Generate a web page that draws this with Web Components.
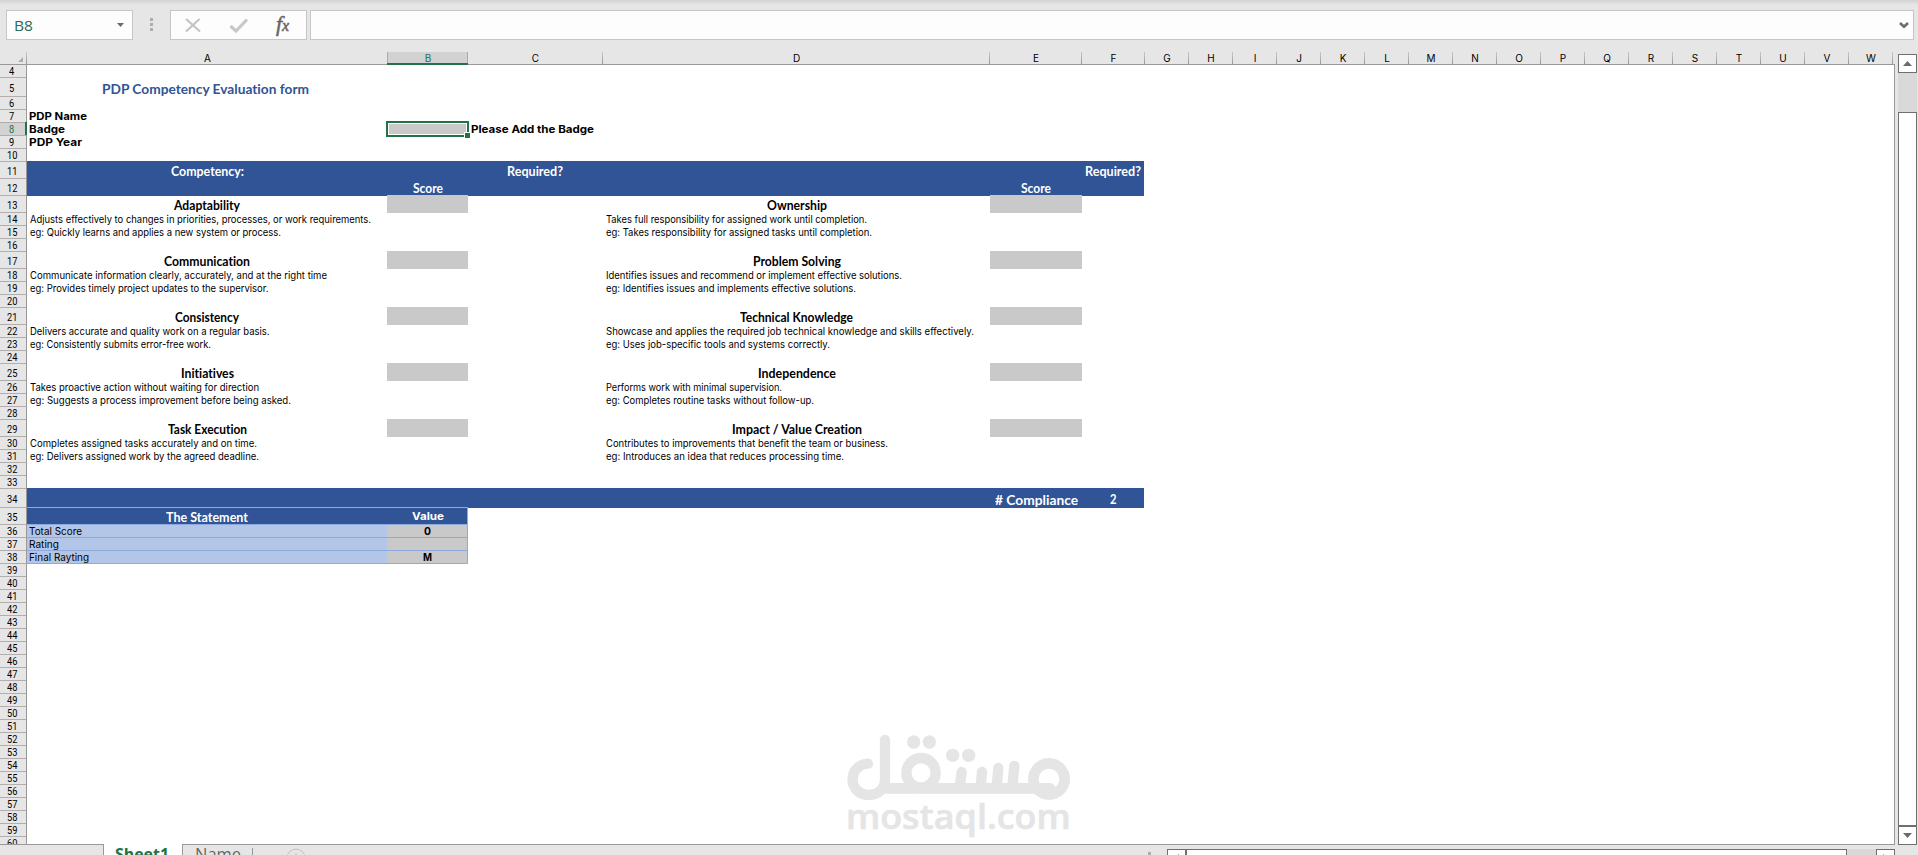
<!DOCTYPE html>
<html lang="en">
<head>
<meta charset="utf-8">
<title>PDP Competency Evaluation form</title>
<style>
  html, body { margin: 0; height: 855px; overflow: hidden; background: #e6e6e6; }
  body { font-family: Inter, "Liberation Sans", sans-serif; color: #000; }
</style>
</head>
<body>
<sheet-app></sheet-app>

<script>
// fit-text: one line of text squeezed or stretched to the width given in w
class FitText extends HTMLElement {
  connectedCallback() {
    const shadow = this.attachShadow({ mode: "open" });
    shadow.innerHTML = `
      <style>
        :host { display: inline-block; white-space: nowrap; font-variant-ligatures: none; }
        span { display: inline-block; transform-origin: 0 50%; }
      </style>
      <span><slot></slot></span>
    `;
    const w = parseFloat(this.getAttribute("w"));
    if (!w) return;
    const span = shadow.querySelector("span");
    const natural = span.getBoundingClientRect().width;
    this.style.width = `${w}px`;
    if (natural) span.style.transform = `scaleX(${w / natural})`;
  }
}
customElements.define("fit-text", FitText);

// formula-bar: name box, cancel / enter / fx buttons and the formula input
class FormulaBar extends HTMLElement {
  constructor() {
    super();
    const shadow = this.attachShadow({ mode: "open" });
    shadow.innerHTML = `
      <style>
        :host { display: flex; box-sizing: border-box; height: 52px; padding: 10px 4px 12px 6px;
          background: linear-gradient(#d2d2d2, #e6e6e6 5px); }
        .box { box-sizing: border-box; height: 30px; background: #fdfdfd; border: 1px solid #c6c6c6;
          display: flex; align-items: center; }
        .name { width: 127px; padding: 0 8px 0 7px; justify-content: space-between;
          color: #2f6a55; font: 15px/28px "Open Sans", sans-serif; }
        .dots { width: 37px; display: flex; flex-direction: column; align-items: center; gap: 2px; padding-top: 8px; }
        .dots i { width: 3px; height: 3px; background: #b2abab; }
        .buttons { width: 137px; margin-right: 3px; }
        .input { flex: 1; justify-content: flex-end; padding-right: 4px; }
        svg { display: block; }
      </style>
      <div class="box name"><fit-text w="19">B8</fit-text>
        <svg width="7" height="4"><path d="M0 0h7L3.500 4z" fill="#6b6b6b"/></svg></div>
      <div class="dots"><i></i><i></i><i></i></div>
      <div class="box buttons">
        <svg width="135" height="28" fill="none">
          <path d="M15 8l14 12.500M28.500 8L15 20.500" stroke="#c4c4c4" stroke-width="2.200"/>
          <path d="M59.500 15l5.500 5 11-11.500" stroke="#c8c8c8" stroke-width="3.200"/>
          <g font-family="Liberation Serif, serif" font-style="italic" fill="#666" stroke="#666" stroke-width=".5">
            <text x="105" y="19.500" font-size="22">f</text>
            <text x="111" y="20" font-size="16">x</text>
          </g>
        </svg>
      </div>
      <div class="box input">
        <svg width="10" height="7"><path d="M1 1l4 3.800L9 1" fill="none" stroke="#6b6b6b" stroke-width="2.600"/></svg>
      </div>
    `;
  }
}
customElements.define("formula-bar", FormulaBar);

const COLS = [
  ["A", 360], ["B", 81], ["C", 135], ["D", 387], ["E", 92], ["F", 63],
  ..."GHIJKLMNOPQRSTUVW".split("").map(c => [c, 44]),
];

// column-heads: the strip of column letters
class ColumnHeads extends HTMLElement {
  constructor() {
    super();
    const shadow = this.attachShadow({ mode: "open" });
    shadow.innerHTML = `
      <style>
        :host { display: flex; box-sizing: border-box; height: 13px; border-bottom: 1px solid #999;
          background: #e6e6e6; font: 10px/12px Inter, "Liberation Sans", sans-serif; position: relative; z-index: 1; }
        div { box-sizing: border-box; flex: none; text-align: center; height: 12px; padding-left: 1px; }
        .line { border-right: 1px solid; border-image: linear-gradient(#d0cccc, #999090) 1; }
        .B { background: #d2d2d2; color: #217346; height: 13px; border-bottom: 2px solid #217346;
          box-shadow: inset 1px 0 #b0a8a8, inset -1px 0 #b0a8a8; }
        .corner { width: 27px; display: flex; justify-content: flex-end; padding: 5px 3px 0 0; }
      </style>
      <div class="corner line"><svg width="5" height="5"><path d="M5 0v5H0z" fill="#b2abab"/></svg></div>
      ${COLS.map(([c, w]) => `<div class="${c}${c === "A" || c === "B" ? "" : " line"}" style="width:${w}px">${c}</div>`).join("")}
    `;
  }
}
customElements.define("column-heads", ColumnHeads);

// sheet-cell: fill = blue | gray | pale, kind = strong | head | title
class SheetCell extends HTMLElement {
  constructor() {
    super();
    const shadow = this.attachShadow({ mode: "open" });
    shadow.innerHTML = `
      <style>
        :host { display: block; flex: none; box-sizing: border-box; padding: 1px 0 0 2px;
          height: 100%; white-space: nowrap; font-size: 10.5px; line-height: var(--line); position: relative; }
        :host([align="center"]) { text-align: center; padding-left: 0; }
        :host([kind="strong"]) { font-weight: 700; }
        :host([kind="head"]) { font: bold 12.5px/var(--line) Lato, sans-serif; padding-top: 1.5px; }
        :host([kind="title"]) { font: bold 14px/var(--line) Lato, sans-serif; color: #305496; padding-top: 1.5px; }
        :host([fill="blue"]) { background: #305496; box-shadow: 0 1px #305496; color: #fff; }
        :host([fill="gray"]) { background: #c9c9c9; box-shadow: 0 1px #c9c9c9; }
        :host([fill="pale"]) { background: #b4c6e7; }
        :host([table]) { box-shadow: inset 0 1px #8ea9db, 0 1px #8ea9db; }
        :host([table="end"]) { box-shadow: inset -1px 1px #8ea9db, 0 1px #8ea9db; }
        .pick { position: absolute; left: -1px; top: -1px; right: -1px; bottom: -2px; box-sizing: border-box;
          border: 2px solid #217346; box-shadow: inset 0 0 0 1px #fff; }
        .pick::after { content: ""; position: absolute; right: -3px; bottom: -3px; width: 5px; height: 5px;
          background: #217346; box-shadow: -1px -1px #fff; }
        :host([picked]) { z-index: 2; }
      </style>
      <slot></slot>
    `;
  }
  connectedCallback() {
    if (!this.hasAttribute("picked")) return;
    const pick = document.createElement("div");
    pick.className = "pick";
    this.shadowRoot.appendChild(pick);
  }
}
customElements.define("sheet-cell", SheetCell);

// sheet-row: row number on the left, cells in the slot
class SheetRow extends HTMLElement {
  connectedCallback() {
    const n = this.getAttribute("n");
    const h = this.getAttribute("h");
    const shadow = this.attachShadow({ mode: "open" });
    shadow.innerHTML = `
      <style>
        :host { display: flex; height: ${h}px; --line: ${h}px; }
        .num { flex: none; box-sizing: border-box; width: 27px; padding: ${h > 13 ? 2 : 1}px 2px 0 0; text-align: center;
          font: 10.5px/${h}px Roboto, sans-serif; background: #e6e6e6; border-right: 1px solid #999;
          box-shadow: inset 0 1px #b3adad; }
        :host([n="4"]) .num { box-shadow: none; }
        :host([n="8"]) .num { background: #d2d2d2; color: #217346; border-right: 2px solid #217346; padding-right: 1px; }
      </style>
      <div class="num"><fit-text w="${n.length * 5.2}">${n}</fit-text></div>
      <slot></slot>
    `;
  }
}
customElements.define("sheet-row", SheetRow);

// セル内容: [列, 文字, 幅, 属性, 横ずれ]
const HEAD = 'kind="head" align="center"';
const DATA = {
  5: [["A", "PDP Competency Evaluation form", 207, 'kind="title" align="center"', -2]],
  7: [["A", "PDP Name", 58, 'kind="strong"']],
  8: [["A", "Badge", 36, 'kind="strong"'], ["B", "", 0, 'fill="gray" picked'],
      ["C", "Please Add the Badge", 123, 'kind="strong"', .5]],
  9: [["A", "PDP Year", 53, 'kind="strong"']],
  11: [["A", "Competency:", 73, HEAD], ["C", "Required?", 56, HEAD, -1],
       ["F", "Required?", 56, HEAD]],
  12: [["B", "Score", 30, HEAD], ["E", "Score", 30, HEAD]],
  34: [["E", "# Compliance", 83, 'kind="title" align="center"'], ["F", "2", 6.5, `${HEAD} style="padding-top:2px"`]],
  35: [["A", "The Statement", 82, `${HEAD} fill="blue" table`, -.5],
       ["B", "Value", 32, 'kind="strong" align="center" fill="blue" table="end"', -1]],
  36: [["A", "Total Score", 53, 'fill="pale" table'], ["B", "0", 7, 'kind="strong" align="center" fill="gray" table="end"']],
  37: [["A", "Rating", 30, 'fill="pale" table'], ["B", "", 0, 'fill="gray" table="end"']],
  38: [["A", "Final Rayting", 60, 'fill="pale" table'], ["B", "M", 9, 'kind="strong" align="center" fill="gray" table="end"']],
};
DATA[34][1][3] = HEAD;

// 能力項目（左右5件ずつ、4行ごと）
const SKILLS = [
  ["Adaptability", 66, "Adjusts effectively to changes in priorities, processes, or work requirements.", 341,
   "eg: Quickly learns and applies a new system or process.", 251,
   "Ownership", 60, "Takes full responsibility for assigned work until completion.", 261,
   "eg: Takes responsibility for assigned tasks until completion.", 266],
  ["Communication", 86, "Communicate information clearly, accurately, and at the right time", 297,
   "eg: Provides timely project updates to the supervisor.", 238.5,
   "Problem Solving", 88, "Identifies issues and recommend or implement effective solutions.", 296,
   "eg: Identifies issues and implements effective solutions.", 250],
  ["Consistency", 64, "Delivers accurate and quality work on a regular basis.", 239.5,
   "eg: Consistently submits error-free work.", 181,
   "Technical Knowledge", 113, "Showcase and applies the required job technical knowledge and skills effectively.", 368,
   "eg: Uses job-specific tools and systems correctly.", 224],
  ["Initiatives", 53, "Takes proactive action without waiting for direction", 229,
   "eg: Suggests a process improvement before being asked.", 261,
   "Independence", 78, "Performs work with minimal supervision.", 176,
   "eg: Completes routine tasks without follow-up.", 208],
  ["Task Execution", 79, "Completes assigned tasks accurately and on time.", 227,
   "eg: Delivers assigned work by the agreed deadline.", 229,
   "Impact / Value Creation", 130, "Contributes to improvements that benefit the team or business.", 282,
   "eg: Introduces an idea that reduces processing time.", 238],
];
SKILLS.forEach((s, i) => {
  const r = 13 + i * 4;
  DATA[r] = [["A", s[0], s[1], HEAD], ["B", "", 0, 'fill="gray"'], ["D", s[6], s[7], HEAD], ["E", "", 0, 'fill="gray"']];
  DATA[r + 1] = [["A", s[2], s[3], "", .25], ["D", s[8], s[9], "", .25]];
  DATA[r + 2] = [["A", s[4], s[5], "", .25], ["D", s[10], s[11], "", .25]];
});

// 行の高さ
function rowHeight(n) {
  if (n === 4) return 12;
  if (n === 5 || n === 34) return 19;
  if ([11, 12, 13, 17, 21, 25, 29, 35].includes(n)) return 17;
  return 13;
}

function rowCells(n) {
  const isBar = n === 11 || n === 12 || n === 34;
  const data = DATA[n] || [];
  return COLS.slice(0, 6).map(([col, w]) => {
    const [, text, fit, attrs, dx = 0] = data.find(d => d[0] === col) || [col, "", 0, ""];
    const inner = text ? `<fit-text w="${fit}" style="margin-left:${dx * 2}px">${text}</fit-text>` : "";
    const width = col === "F" ? w - 1 : w;
    return `<sheet-cell col="${col}" ${attrs} ${isBar ? 'fill="blue"' : ""} style="width:${width}px">${inner}</sheet-cell>`;
  }).join("");
}

// mostaql-mark: pale watermark over the lower rows
class MostaqlMark extends HTMLElement {
  constructor() {
    super();
    const shadow = this.attachShadow({ mode: "open" });
    shadow.innerHTML = `
      <style>
        :host { display: block; width: 240px; height: 114px; }
        svg { display: block; }
      </style>
      <svg width="240" height="114" viewBox="60 30 720 342" fill="none" stroke="#e5e5e5" stroke-linecap="round">
        <path d="M144 131A47 47 0 1 0 145 225C176 225 195 205 195 178V60" stroke-width="31"/>
        <path d="M190 205H690" stroke-width="32"/>
        <circle cx="303" cy="158" r="44" stroke-width="31"/>
        <circle cx="687" cy="177" r="47" stroke-width="32"/>
        <path d="M425 156l-6 45M486 156l-4 45M535 144l-5 57M583 138l-6 63" stroke-width="31"/>
        <g fill="#e5e5e5" stroke="none">
          <circle cx="281" cy="66" r="20"/><circle cx="328" cy="66" r="20"/>
          <circle cx="398" cy="106" r="20"/><circle cx="446" cy="106" r="20"/>
        </g>
        <text x="78" y="328" font-family="Open Sans, sans-serif" font-weight="600" font-size="102" textLength="674"
          lengthAdjust="spacingAndGlyphs" fill="#e5e5e5" stroke-width="2" stroke-linejoin="round">mostaql.com</text>
      </svg>
    `;
  }
}
customElements.define("mostaql-mark", MostaqlMark);

// sheet-grid: column letters plus every visible row
class SheetGrid extends HTMLElement {
  constructor() {
    super();
    const shadow = this.attachShadow({ mode: "open" });
    let rows = "";
    for (let n = 4; n <= 60; n++) rows += `<sheet-row n="${n}" h="${rowHeight(n)}">${rowCells(n)}</sheet-row>`;
    shadow.innerHTML = `
      <style>
        :host { display: block; width: 1895px; height: 792px; overflow: hidden; position: relative; }
        .rows { background: #fff; border-right: 1px solid #999; height: 779px; overflow: hidden; }
        mostaql-mark { position: absolute; left: 840px; top: 678px; }
      </style>
      <column-heads></column-heads>
      <div class="rows">${rows}</div>
      <mostaql-mark></mostaql-mark>
    `;
  }
}
customElements.define("sheet-grid", SheetGrid);

// side-scroll: vertical scroll bar
class SideScroll extends HTMLElement {
  constructor() {
    super();
    const shadow = this.attachShadow({ mode: "open" });
    shadow.innerHTML = `
      <style>
        :host { display: flex; flex-direction: column; box-sizing: border-box; width: 19px; height: 793px;
          margin-left: 3px; padding-top: 2px; }
        div { box-sizing: border-box; background: #fff; border: 1px solid #6f6f6f; display: grid; place-items: center; }
        .btn { height: 19px; }
        .track { height: 39px; background: #d9d9d9; border: 0; }
        .thumb { flex: 1; }
      </style>
      <div class="btn"><svg width="9" height="5"><path d="M4.500 0L9 5H0z" fill="#6b6b6b"/></svg></div>
      <div class="track"></div>
      <div class="thumb"></div>
      <div class="btn"><svg width="9" height="5"><path d="M0 0h9L4.500 5z" fill="#6b6b6b"/></svg></div>
    `;
  }
}
customElements.define("side-scroll", SideScroll);

// sheet-tabs: sheet tabs and the horizontal scroll bar, cut by the window edge
class SheetTabs extends HTMLElement {
  constructor() {
    super();
    const shadow = this.attachShadow({ mode: "open" });
    shadow.innerHTML = `
      <style>
        :host { display: flex; width: 1895px; height: 11px; overflow: hidden; }
        div { box-sizing: border-box; flex: none; height: 30px; }
        .nav { width: 104px; border: solid #999; border-width: 1px 1px 0 0; }
        .tab { font: 16px/20px "Open Sans", sans-serif; white-space: nowrap; }
        .on { width: 78px; padding: 0 0 0 11px; background: #fff; color: #217346; font-weight: 700; }
        .off { width: 71px; padding: 0 0 0 12px; color: #666; border: solid #999; border-width: 1px 0 0 1px; line-height: 19px; }
        .rest { flex: 1; display: flex; border-top: 1px solid #999; padding-top: 3px; }
        .sep { width: 1px; height: 20px; background: #999; margin-left: -1px; }
        .plus { margin: 0 auto 0 33px; }
        .grip { width: 3px; height: 12px; background: #b2abab; margin: 4px 16px 0 0; }
        .bar { display: flex; margin-top: 1px; width: 728px; background: #d9d9d9; }
        .bar div { height: 19px; background: #fff; border: 1px solid #6f6f6f; width: 19px; display: grid; place-items: center; }
        .bar .thumb { width: 661px; margin: 0 auto 0 0; }
      </style>
      <div class="nav"></div>
      <div class="tab on"><fit-text w="54">Sheet1</fit-text></div>
      <div class="tab off"><fit-text w="46">Name</fit-text></div>
      <div class="rest">
        <div class="sep"></div>
        <svg class="plus" width="20" height="20" fill="none" stroke="#c0c0c0"><circle cx="10" cy="10" r="9"/><path d="M10 5v10M5 10h10"/></svg>
        <div class="grip"></div>
        <div class="bar">
          <div><svg width="5" height="9"><path d="M5 0v9L0 4.500z" fill="#6b6b6b"/></svg></div>
          <div class="thumb"></div>
          <div><svg width="5" height="9"><path d="M0 0v9l5-4.500z" fill="#6b6b6b"/></svg></div>
        </div>
      </div>
    `;
  }
}
customElements.define("sheet-tabs", SheetTabs);

class SheetApp extends HTMLElement {
  constructor() {
    super();
    const shadow = this.attachShadow({ mode: "open" });
    shadow.innerHTML = `
      <style>
        :host { display: flex; flex-direction: column; width: 1918px; height: 855px; overflow: hidden; background: #e6e6e6; }
        main { display: flex; height: 792px; }
      </style>
      <formula-bar></formula-bar>
      <main><sheet-grid></sheet-grid><side-scroll></side-scroll></main>
      <sheet-tabs></sheet-tabs>
    `;
  }
}
customElements.define("sheet-app", SheetApp);
</script>
</body>
</html>
